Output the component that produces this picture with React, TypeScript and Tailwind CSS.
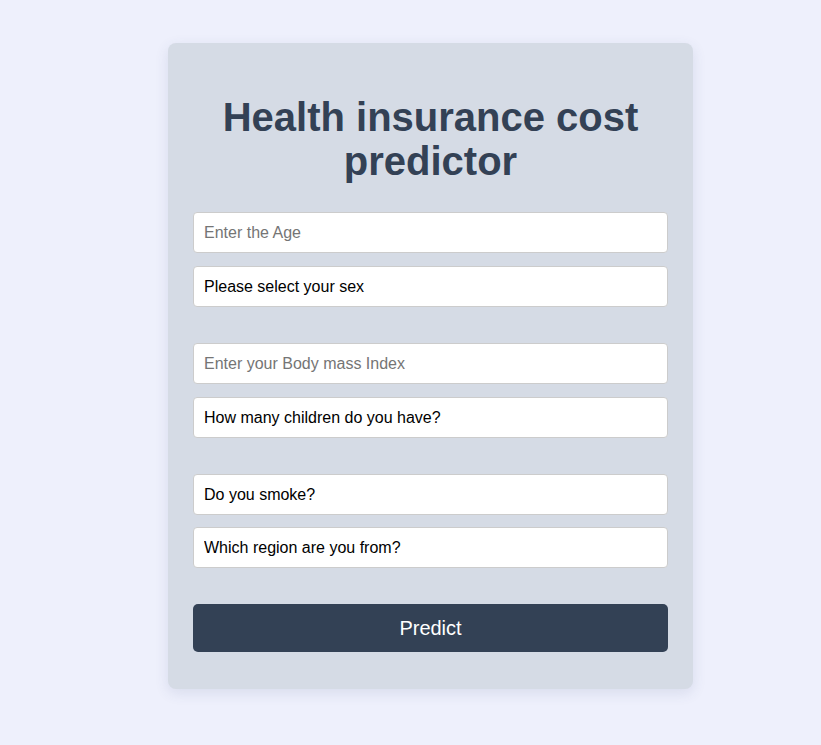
import { useState } from "react"

const fieldClass =
  "w-full h-[41px] px-[10px] bg-white border border-[#cccccc] rounded-[4px] text-[16px] text-black placeholder:text-[#757575] outline-none appearance-none"

export default function App() {
  const [age, setAge] = useState("")
  const [sex, setSex] = useState("")
  const [bmi, setBmi] = useState("")
  const [children, setChildren] = useState("")
  const [smoker, setSmoker] = useState("")
  const [region, setRegion] = useState("")

  return (
    <div
      className="min-h-[745px] bg-[#eef0fc] pt-[43px] pl-[168px]"
      style={{ fontFamily: '"Liberation Sans", Arial, sans-serif' }}
    >
      <div className="w-[525px] bg-[#d5dbe5] rounded-lg shadow-[0_4px_14px_rgba(60,70,120,0.12)] px-[25px] pt-[52px] pb-[37px]">
        <h1 className="text-center text-[40px] leading-[44px] font-bold text-[#334155]">
          Health insurance cost predictor
        </h1>

        <form className="mt-[29px] flex flex-col" onSubmit={e => e.preventDefault()}>
          {/* age / sex */}
          <div className="flex flex-col gap-[13px]">
            <input
              className={fieldClass}
              placeholder="Enter the Age"
              value={age}
              onChange={e => setAge(e.target.value)}
            />
            <select className={fieldClass} value={sex} onChange={e => setSex(e.target.value)}>
              <option value="">Please select your sex</option>
              <option value="male">Male</option>
              <option value="female">Female</option>
            </select>
          </div>

          {/* bmi / children */}
          <div className="mt-[36px] flex flex-col gap-[13px]">
            <input
              className={fieldClass}
              placeholder="Enter your Body mass Index"
              value={bmi}
              onChange={e => setBmi(e.target.value)}
            />
            <select
              className={fieldClass}
              value={children}
              onChange={e => setChildren(e.target.value)}
            >
              <option value="">How many children do you have?</option>
              <option value="0">0</option>
              <option value="1">1</option>
              <option value="2">2</option>
              <option value="3">3</option>
              <option value="4">4</option>
              <option value="5">5</option>
            </select>
          </div>

          {/* smoker / region */}
          <div className="mt-[36px] flex flex-col gap-[12px]">
            <select className={fieldClass} value={smoker} onChange={e => setSmoker(e.target.value)}>
              <option value="">Do you smoke?</option>
              <option value="yes">Yes</option>
              <option value="no">No</option>
            </select>
            <select className={fieldClass} value={region} onChange={e => setRegion(e.target.value)}>
              <option value="">Which region are you from?</option>
              <option value="northeast">Northeast</option>
              <option value="northwest">Northwest</option>
              <option value="southeast">Southeast</option>
              <option value="southwest">Southwest</option>
            </select>
          </div>

          <button
            type="submit"
            className="mt-[36px] h-[48px] w-full rounded-[5px] bg-[#334155] text-white text-[20px] leading-[46px]"
          >
            Predict
          </button>
        </form>
      </div>
    </div>
  )
}
